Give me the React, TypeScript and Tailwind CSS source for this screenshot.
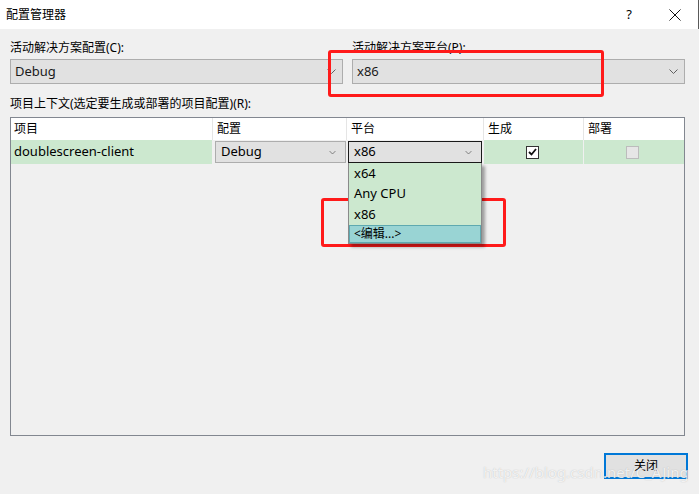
import React from 'react';

const font = { fontFamily: '"Noto Sans", "Noto Sans CJK SC", sans-serif' };

const Chevron: React.FC<{ className?: string }> = ({ className }) => (
  <svg className={className} width="9" height="5" viewBox="0 0 9 5" fill="none">
    <path d="M0.5 0.5 L4.5 4.5 L8.5 0.5" stroke="#606060" strokeWidth="1" />
  </svg>
);

const Combo: React.FC<{ value: string }> = ({ value }) => (
  <div className="flex h-[25px] items-center justify-between border border-[#adadad] bg-[#e1e1e1] pl-[4px] pr-[6px] text-[13px] text-[#1a1a1a]">
    <span>{value}</span>
    <Chevron />
  </div>
);

export default function App() {
  return (
    <div className="relative h-[494px] w-[699px] overflow-hidden bg-[#f0f0f0] text-[12px] text-black" style={font}>
      {/* title bar */}
      <div className="flex h-[29px] items-center justify-between bg-white pl-[6px] border-r border-[#5a5a5a]">
        <span className="text-[12px]">配置管理器</span>
        <div className="flex items-center">
          <span className="w-[46px] text-center text-[13px]">?</span>
          <svg className="mx-[17px]" width="12" height="12" viewBox="0 0 12 12">
            <path d="M0.5 0.5 L11.5 11.5 M11.5 0.5 L0.5 11.5" stroke="#111" strokeWidth="1" />
          </svg>
        </div>
      </div>

      <div className="px-[10px]">
        <div className="mt-[11px] flex gap-[9px]">
          <div className="flex w-[333px] flex-col gap-[3px]">
            <span className="leading-[16px]">活动解决方案配置(C):</span>
            <Combo value="Debug" />
          </div>
          <div className="flex w-[333px] flex-col gap-[3px]">
            <span className="leading-[16px]">活动解决方案平台(P):</span>
            <Combo value="x86" />
          </div>
        </div>

        <div className="mt-[12px] leading-[16px]">项目上下文(选定要生成或部署的项目配置)(R):</div>

        {/* grid */}
        <div className="relative mt-[5px] h-[319px] w-[675px] border border-[#828790] bg-[#f0f0f0]">
          <div className="flex h-[22px] bg-white text-[12px]">
            <div className="flex w-[202px] items-center border-r border-[#e5e5e5] pl-[3px]">项目</div>
            <div className="flex w-[134px] items-center border-r border-[#e5e5e5] pl-[4px]">配置</div>
            <div className="flex w-[137px] items-center border-r border-[#e5e5e5] pl-[4px]">平台</div>
            <div className="flex w-[100px] items-center border-r border-[#e5e5e5] pl-[4px]">生成</div>
            <div className="flex flex-1 items-center pl-[4px]">部署</div>
          </div>
          <div className="flex h-[24px] text-[13px]">
            <div className="flex w-[202px] items-center border-r border-[#f0f0f0] bg-[#cce8cf] pl-[3px]">doublescreen-client</div>
            <div className="flex w-[134px] items-center pl-[2px] pr-[1px]">
              <div className="flex h-[22px] w-full items-center justify-between border border-[#adadad] bg-[#e1e1e1] pl-[5px] pr-[8px]">
                <span>Debug</span>
                <Chevron className="scale-75" />
              </div>
            </div>
            <div className="relative flex w-[137px] items-center pl-[1px] pr-[2px]">
              <div className="flex h-[22px] w-full items-center justify-between border border-[#1a1a1a] bg-[#e1e1e1] pl-[5px] pr-[8px]">
                <span>x86</span>
                <Chevron className="scale-75" />
              </div>
              {/* dropdown */}
              <div className="absolute left-[1px] top-[23px] z-10 w-[134px] border border-[#8a8a8a] border-t-0 bg-[#cce8cf] shadow-[3px_3px_3px_rgba(0,0,0,0.35)]">
                <div className="flex h-[21px] items-center pl-[5px]">x64</div>
                <div className="flex h-[19px] items-center pl-[5px]">Any CPU</div>
                <div className="mt-[1px] flex h-[21px] items-center pl-[5px]">x86</div>
                <div className="flex h-[18px] items-center border border-[#5ea9b0] bg-[#99d4d4] pl-[4px] text-[12px]">&lt;编辑...&gt;</div>
              </div>
            </div>
            <div className="flex w-[100px] items-center justify-center border-r border-[#f0f0f0] bg-[#cce8cf]">
              <div className="ml-[-3px] flex h-[13px] w-[13px] items-center justify-center border border-[#333] bg-white">
                <svg width="9" height="8" viewBox="0 0 9 8">
                  <path d="M1 4 L3.5 6.5 L8 1" stroke="#111" strokeWidth="1.8" fill="none" />
                </svg>
              </div>
            </div>
            <div className="flex flex-1 items-center justify-center bg-[#cce8cf]">
              <div className="ml-[-4px] h-[13px] w-[13px] border border-[#bcbcbc] bg-[#e6e6e6]" />
            </div>
          </div>
        </div>

        <div className="mt-[17px] flex justify-end pr-[1px]">
          <button className="flex h-[26px] w-[84px] items-center justify-center border-2 border-[#0078d7] bg-[#e1e1e1] text-[12px]">
            关闭
          </button>
        </div>
      </div>

      {/* watermark */}
      <div className="absolute left-[483px] top-[461px] text-[15px] text-white/80 [text-shadow:0_0_1px_rgba(120,120,120,0.5)]">
        https://blog.csdn.net/C_AJing
      </div>

      {/* red annotation boxes */}
      <div className="absolute left-[328px] top-[50px] h-[47px] w-[276px] rounded-[3px] border-[3px] border-[#ff1a1a]" />
      <div className="absolute left-[321px] top-[198px] h-[49px] w-[185px] rounded-[3px] border-[3px] border-[#ff1a1a]" />
    </div>
  );
}
